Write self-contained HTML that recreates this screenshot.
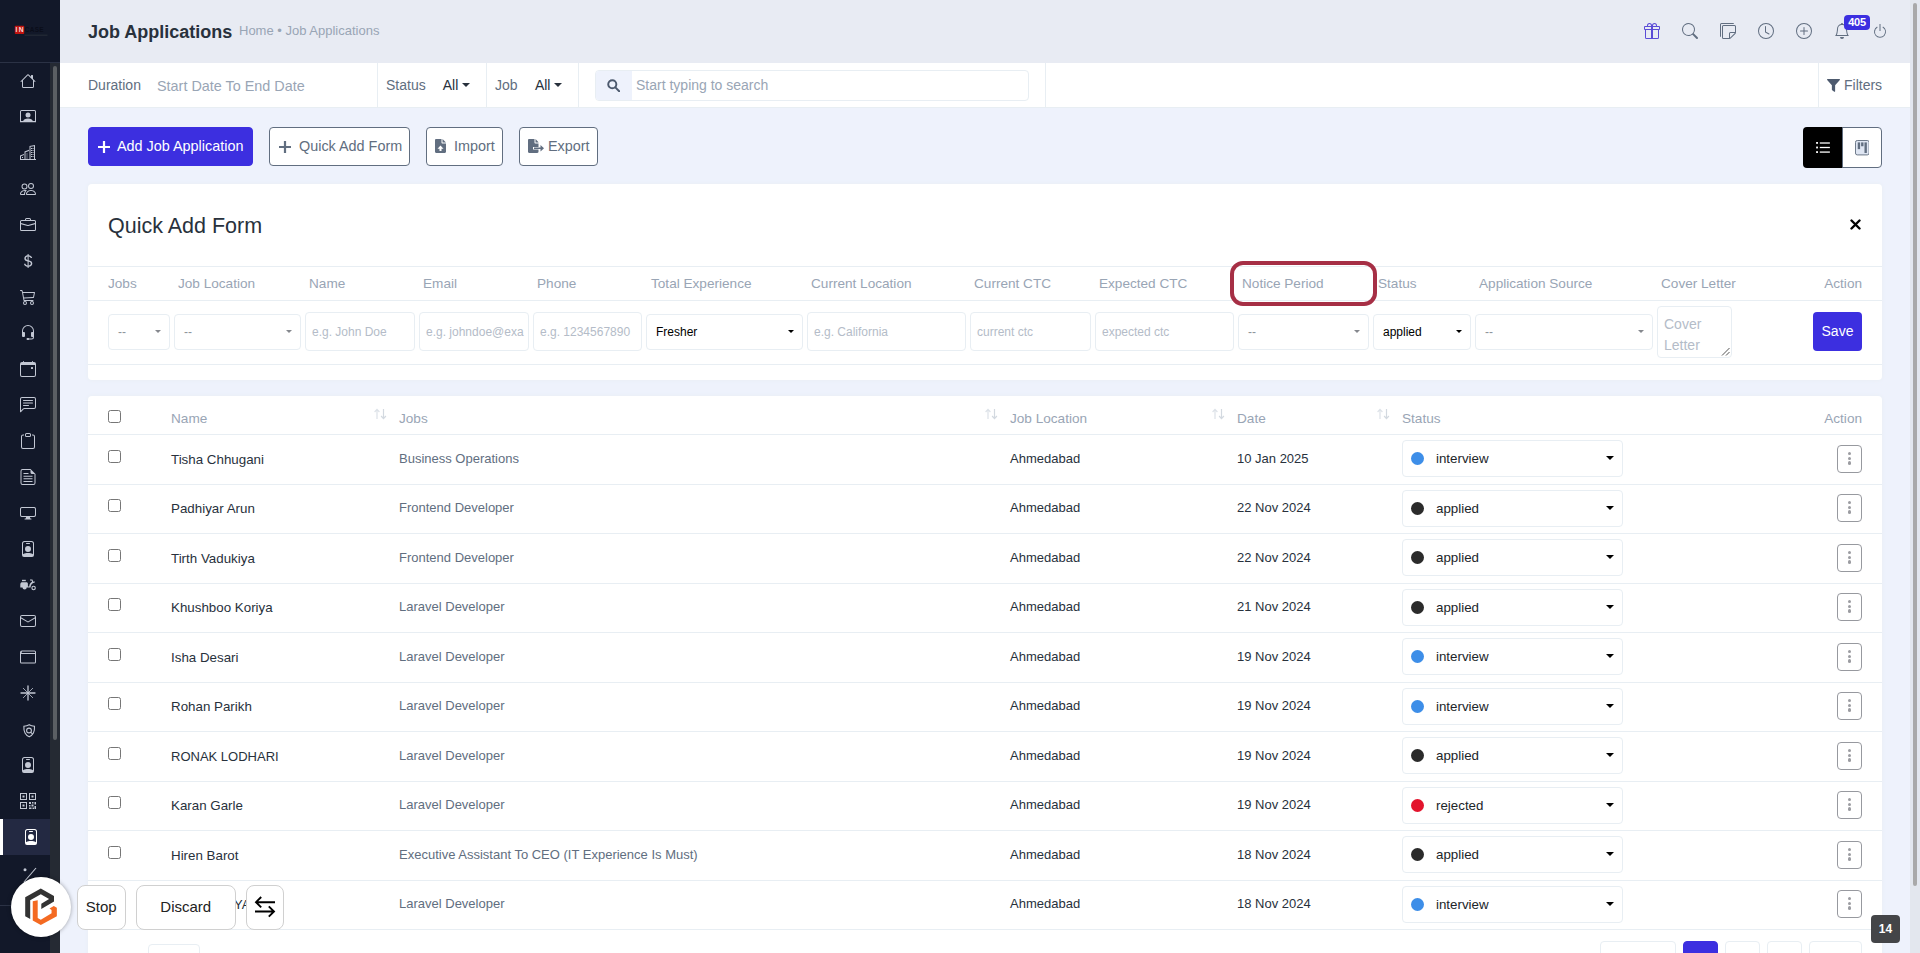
<!DOCTYPE html>
<html lang="en">
<head>
<meta charset="utf-8">
<title>Job Applications</title>
<style>
*{box-sizing:border-box;margin:0;padding:0}
html,body{width:1920px;height:953px;overflow:hidden}
body{position:relative;background:#eef2fc;font-family:"Liberation Sans",Arial,sans-serif;font-size:14px;color:#28313c}
.abs{position:absolute}
.ic{display:block;overflow:visible}
#side{position:absolute;left:0;top:0;width:60px;height:953px;background:#121829}
#side .logo{position:absolute;left:0;top:0;width:60px;height:63px;border-bottom:1px solid #2b3245}
#side .track{position:absolute;left:50px;top:63px;width:10px;height:890px;background:#252a33}
#side .thumb{position:absolute;left:53px;top:66px;width:4px;height:674px;background:#5b5f63;border-radius:2px}
.sic{position:absolute;left:20px;width:16px;height:16px}
.sact{position:absolute;left:0;width:50px;height:36px;background:#232942;border-left:3px solid #fff}
#side .sep{position:absolute;left:0;top:905px;width:50px;height:1px;background:#2b3245}
#head{position:absolute;left:60px;top:0;width:1850px;height:63px;background:#e8ebf3}
#head h1{position:absolute;left:28px;top:21px;font-size:18px;line-height:22px;font-weight:bold;color:#28313c;white-space:nowrap}
#head .bc{position:absolute;left:179px;top:23px;font-size:13px;line-height:16px;color:#99a5b5;white-space:nowrap}
.tic{position:absolute;top:23px;width:16px;height:16px}
.nbadge{position:absolute;left:1844px;top:15px;width:26px;height:15px;border-radius:4px;background:#3c2fe0;color:#fff;font-size:11px;font-weight:bold;line-height:15px;text-align:center;letter-spacing:-0.3px}
#vscroll{position:absolute;left:1910px;top:0;width:10px;height:953px;background:#e3e7ee}
#vscroll i{position:absolute;left:3px;top:3px;width:4px;height:883px;background:#a9a9a9;border-radius:2px}
#fbar{position:absolute;left:60px;top:63px;width:1850px;height:45px;background:#fff;border-bottom:1px solid #e8eef3}
#fbar .vl{position:absolute;top:0;width:1px;height:44px;background:#e8eef3}
#fbar .t{position:absolute;top:13px;line-height:18px;font-size:14px;color:#616e80;white-space:nowrap}
#fbar .ph{color:#99a5b5}
#fbar .dk{color:#28313c}
.caret{display:inline-block;width:0;height:0;border-left:4px solid transparent;border-right:4px solid transparent;border-top:4px solid #28313c;margin-left:4px;vertical-align:3px}
#sbox{position:absolute;left:535px;top:7px;width:434px;height:31px;border:1px solid #e8eef3;border-radius:4px;background:#fff;overflow:hidden}
#sbox .ad{position:absolute;left:0;top:0;width:36px;height:29px;background:#eef2fc}
#sbox .ph{position:absolute;left:40px;top:5px;font-size:14px;line-height:18px;color:#99a5b5}
.btn{position:absolute;top:127px;height:39px;border-radius:4px;font-size:14.400px;line-height:37px;white-space:nowrap;border:1px solid #616e80;background:#fff;color:#616e80}
.btn.pri{background:#3c2fe0;border-color:#3c2fe0;color:#fff}
.btn span{position:absolute;top:0}
.btn svg{position:absolute}
#vt{position:absolute;left:1803px;top:127px;width:79px;height:41px}
#vt .l{position:absolute;left:0;top:0;width:40px;height:41px;background:#000;border-radius:4px 0 0 4px}
#vt .r{position:absolute;left:39px;top:0;width:40px;height:41px;background:#fff;border:1px solid #616e80;border-radius:0 4px 4px 0}
.card{position:absolute;left:88px;width:1794px;background:#fff;border-radius:4px;box-shadow:0 0 4px 0 #e8eef3}
#qa{top:184px;height:196px}
#qa h2{position:absolute;left:20px;top:29px;font-size:21.500px;line-height:26px;font-weight:normal;color:#28313c}
#qa .hl{position:absolute;left:0;width:1794px;height:1px;background:#e8eef3}
#qa .lb{position:absolute;top:92px;font-size:13.600px;line-height:16px;color:#99a5b5;white-space:nowrap}
.inp{position:absolute;top:128.200px;height:38.400px;border:1px solid #e8eef3;border-radius:4px;background:#fff;font-size:12px;line-height:36px;padding-top:1.300px;color:#b4bcc8;padding-left:6px;white-space:nowrap;overflow:hidden}
.sel{position:absolute;top:130px;height:36px;border:1px solid #e8eef3;border-radius:4px;background:#fff;font-size:12px;line-height:34px;color:#8e939b;padding-left:9px;white-space:nowrap;overflow:hidden}
.sel.dk{color:#000}
.sel b{position:absolute;right:8px;top:15px;width:0;height:0;border-left:3px solid transparent;border-right:3px solid transparent;border-top:3.300px solid #85888e}
.sel.dk b{border-top-color:#000;border-left-width:3.500px;border-right-width:3.500px}
#hlbox{position:absolute;left:1230px;top:261px;width:146.500px;height:45px;border:4px solid #a62f45;border-radius:13px}
#tb{top:396px;height:600px}
#tb .th{position:absolute;top:15px;font-size:13.600px;line-height:16px;color:#99a5b5;white-space:nowrap}
#tb .hl{position:absolute;left:0;width:1794px;height:1px;background:#e8eef3}
.tr{position:absolute;left:0;width:1794px;height:50px}
.tr .ln{position:absolute;left:0;width:1794px;height:1px;background:#e8eef3}
.cb{position:absolute;left:20px;top:16px;width:13px;height:13px;border:1px solid #767676;border-radius:2.500px;background:#fff}
.td{position:absolute;top:17px;font-size:13px;line-height:16px;color:#616e80;white-space:nowrap}
.td.dk{color:#28313c}
.td.nm{color:#28313c;top:17.500px;font-size:13.350px}
.ssel{position:absolute;left:1314px;width:220.500px;height:37.400px;border:1px solid #e8eef3;border-radius:4px;background:#fff}
.ssel i{position:absolute;left:8px;top:11px;width:13px;height:13px;border-radius:50%}
.ssel span{position:absolute;left:33px;top:9px;font-size:13.330px;line-height:17px;color:#212529}
.ssel .car{position:absolute;right:8px;top:15px;width:0;height:0;border-left:4px solid transparent;border-right:4px solid transparent;border-top:4px solid #000}
.act{position:absolute;left:1749px;top:11px;width:25px;height:28px;border:1px solid #97999f;border-radius:4px;background:#fff}
.act i{display:block;width:3.300px;height:3.300px;border-radius:50%;background:#9b9ca1;margin:0 auto 1.500px}
.act i:first-child{margin-top:5.900px}
.srt{position:absolute;top:11.500px}
.pg{position:absolute;top:545px;height:40px;border:1px solid #e8eef3;border-radius:4px;background:#fff}
#ov .ob{position:absolute;top:885px;height:44.500px;border:1px solid #d0d0d0;border-radius:8px;background:#fff;font-size:15px;line-height:42px;text-align:center;color:#222}
#ov .circ{position:absolute;left:11px;top:877px;width:60px;height:60px;border-radius:50%;background:#fff;box-shadow:0 0 4px rgba(0,0,0,.35)}
#b14{position:absolute;left:1871px;top:915px;width:29px;height:28px;border-radius:4px;background:#444548;color:#fff;font-size:12px;font-weight:bold;line-height:28px;text-align:center}
</style>
</head>
<body>
<div id="side">
<div class="logo"><svg width="60" height="63" viewBox="0 0 60 63"><rect x="14.800" y="25.800" width="9.400" height="8.200" rx="0.800" fill="#c01410"/><text x="15.400" y="32.300" font-family="Liberation Sans, sans-serif" font-size="6.600" font-weight="bold" fill="#f6dada" textLength="8">IN</text><text x="24.800" y="32.200" font-family="Liberation Sans, sans-serif" font-size="6.400" font-weight="bold" fill="#0a0d19" letter-spacing="0.300">CASE</text><rect x="24.500" y="34.600" width="23" height="1.200" fill="#252b36"/></svg></div>
<div class="track"></div><div class="thumb"></div>
<div class="sic" style="top:73px;left:20px;color:#c3c8d4"><svg class="ic" width="16" height="16" viewBox="0 0 16 16" fill="currentColor" style=""><path d="M8.707 1.5a1 1 0 0 0-1.414 0L.646 8.146a.5.5 0 0 0 .708.708L2 8.207V13.5A1.5 1.5 0 0 0 3.5 15h9a1.5 1.5 0 0 0 1.5-1.5V8.207l.646.647a.5.5 0 0 0 .708-.708L13 5.793V2.5a.5.5 0 0 0-.5-.5h-1a.5.5 0 0 0-.5.5v1.293L8.707 1.5ZM13 7.207V13.5a.5.5 0 0 1-.5.5h-9a.5.5 0 0 1-.5-.5V7.207l5-5 5 5Z"/></svg></div>
<div class="sic" style="top:109px;left:20px;color:#c3c8d4"><svg class="ic" width="16" height="16" viewBox="0 0 16 16" fill="currentColor" style=""><path d="M1.5 2h13a.5.5 0 0 1 .5.5V12h1V2.5A1.5 1.5 0 0 0 14.5 1h-13A1.5 1.5 0 0 0 0 2.500V12h1V2.500a.5.5 0 0 1 .5-.5Z"/><path d="M0 12h3.200c.4-1.500 2-2.600 4.800-2.600s4.400 1.100 4.800 2.600H16v1.200H0Z"/><circle cx="8" cy="6" r="2.500"/></svg></div>
<div class="sic" style="top:145px;left:20px;color:#c3c8d4"><svg class="ic" width="16" height="16" viewBox="0 0 16 16" fill="currentColor" style=""><path d="M9.500 1 15 0v15h-1V1.200l-3.500.650V15h-1V1Z"/><path d="M4.500 6.500 9 4.800v1.100L5.500 7.200V15h-1V6.500Z"/><path d="M0 10.500 4 9v1.100L1 11.200V14h3.500v1H0v-4.500Z"/><path d="M11 3h1v1h-1zM12.500 3h1v1h-1zM11 5h1v1h-1zM12.500 5h1v1h-1zM11 7h1v1h-1zM12.500 7h1v1h-1zM11 9h1v1h-1zM12.500 9h1v1h-1zM11 11h1v1h-1zM12.500 11h1v1h-1zM6.500 8.500h1v1h-1zM6.500 10.500h1v1h-1zM6.500 12.500h1v1h-1zM2 12h1v1H2z"/><path d="M0 14h16v1H0z"/></svg></div>
<div class="sic" style="top:181px;left:20px;color:#c3c8d4"><svg class="ic" width="16" height="16" viewBox="0 0 16 16" fill="currentColor" style=""><path d="M15 14s1 0 1-1-1-4-5-4-5 3-5 4 1 1 1 1h8Zm-7.978-1A.261.261 0 0 1 7 12.996c.001-.264.167-1.030.760-1.720C8.312 10.629 9.282 10 11 10c1.717 0 2.687.630 3.240 1.276.593.690.758 1.457.760 1.720l-.008.002a.274.274 0 0 1-.014.002H7.022ZM11 7a2 2 0 1 0 0-4 2 2 0 0 0 0 4Zm3-2a3 3 0 1 1-6 0 3 3 0 0 1 6 0ZM6.936 9.280a5.880 5.880 0 0 0-1.230-.247A7.350 7.350 0 0 0 5 9c-4 0-5 3-5 4 0 .667.333 1 1 1h4.216A2.238 2.238 0 0 1 5 13c0-1.010.377-2.042 1.090-2.904.243-.294.526-.569.846-.816ZM4.920 10A5.493 5.493 0 0 0 4 13H1c0-.260.164-1.030.760-1.724.545-.636 1.492-1.256 3.160-1.275ZM1.500 5.500a3 3 0 1 1 6 0 3 3 0 0 1-6 0Zm3-2a2 2 0 1 0 0 4 2 2 0 0 0 0-4Z"/></svg></div>
<div class="sic" style="top:217px;left:20px;color:#c3c8d4"><svg class="ic" width="16" height="16" viewBox="0 0 16 16" fill="currentColor" style=""><path d="M6.500 1A1.500 1.500 0 0 0 5 2.500V3H1.500A1.500 1.500 0 0 0 0 4.500v8A1.500 1.500 0 0 0 1.500 14h13a1.500 1.500 0 0 0 1.500-1.500v-8A1.500 1.500 0 0 0 14.500 3H11v-.5A1.500 1.500 0 0 0 9.500 1h-3zm0 1h3a.5.5 0 0 1 .5.5V3H6v-.5a.5.5 0 0 1 .5-.5zm1.886 6.914L15 7.151V12.500a.5.5 0 0 1-.5.5h-13a.5.5 0 0 1-.5-.5V7.150l6.614 1.764a1.500 1.500 0 0 0 .772 0zM1.500 4h13a.5.5 0 0 1 .5.5v1.616L8.129 7.948a.5.5 0 0 1-.258 0L1 6.116V4.500a.5.5 0 0 1 .5-.5z"/></svg></div>
<div class="sic" style="top:253px;left:20px;color:#c3c8d4"><svg class="ic" width="16" height="16" viewBox="0 0 16 16" fill="currentColor" style=""><path d="M4 10.781c.148 1.667 1.513 2.850 3.591 3.003V15h1.043v-1.216c2.270-.179 3.678-1.438 3.678-3.300 0-1.590-.947-2.510-2.956-3.028l-.722-.187V3.467c1.122.110 1.879.714 2.070 1.616h1.470c-.166-1.600-1.540-2.748-3.540-2.875V1H7.591v1.233c-1.939.230-3.270 1.472-3.270 3.156 0 1.454.966 2.483 2.661 2.917l.610.162v4.031c-1.149-.170-1.940-.800-2.131-1.718H4zm3.391-3.836c-1.043-.263-1.600-.825-1.600-1.616 0-.944.704-1.641 1.800-1.828v3.495l-.200-.050zm1.591 1.872c1.287.323 1.852.859 1.852 1.769 0 1.097-.826 1.828-2.200 1.939V8.730l.348.086z"/></svg></div>
<div class="sic" style="top:289px;left:20px;color:#c3c8d4"><svg class="ic" width="16" height="16" viewBox="0 0 16 16" fill="currentColor" style=""><path d="M0 1.500A.5.5 0 0 1 .5 1H2a.5.5 0 0 1 .485.379L2.890 3H14.500a.5.5 0 0 1 .490.598l-1 5a.5.5 0 0 1-.465.401l-9.397.472L4.415 11H13a.5.5 0 0 1 0 1H4a.5.5 0 0 1-.491-.408L2.010 3.607 1.610 2H.5a.5.5 0 0 1-.5-.5zM3.102 4l.840 4.479 9.144-.459L13.890 4H3.102zM5 12a2 2 0 1 0 0 4 2 2 0 0 0 0-4zm7 0a2 2 0 1 0 0 4 2 2 0 0 0 0-4zm-7 1a1 1 0 1 1 0 2 1 1 0 0 1 0-2zm7 0a1 1 0 1 1 0 2 1 1 0 0 1 0-2z"/></svg></div>
<div class="sic" style="top:325px;left:20px;color:#c3c8d4"><svg class="ic" width="16" height="16" viewBox="0 0 16 16" fill="currentColor" style=""><path d="M8 1a5 5 0 0 0-5 5v1h1a1 1 0 0 1 1 1v3a1 1 0 0 1-1 1H3a1 1 0 0 1-1-1V6a6 6 0 1 1 12 0v6a2.500 2.500 0 0 1-2.500 2.500H9.366a1 1 0 0 1-.866.500h-1a1 1 0 1 1 0-2h1a1 1 0 0 1 .866.500H11.500A1.500 1.500 0 0 0 13 12h-1a1 1 0 0 1-1-1V8a1 1 0 0 1 1-1h1V6a5 5 0 0 0-5-5z"/></svg></div>
<div class="sic" style="top:361px;left:20px;color:#c3c8d4"><svg class="ic" width="16" height="16" viewBox="0 0 16 16" fill="currentColor" style=""><path d="M11 6.500a.5.5 0 0 1 .5-.5h1a.5.5 0 0 1 .5.5v1a.5.5 0 0 1-.5.5h-1a.5.5 0 0 1-.5-.5v-1z"/><path d="M3.500 0a.5.5 0 0 1 .5.5V1h8V.5a.5.5 0 0 1 1 0V1h1a2 2 0 0 1 2 2v11a2 2 0 0 1-2 2H2a2 2 0 0 1-2-2V3a2 2 0 0 1 2-2h1V.5a.5.5 0 0 1 .5-.5zM1 4v10a1 1 0 0 0 1 1h12a1 1 0 0 0 1-1V4H1z"/></svg></div>
<div class="sic" style="top:397px;left:20px;color:#c3c8d4"><svg class="ic" width="16" height="16" viewBox="0 0 16 16" fill="currentColor" style=""><path d="M14 1a1 1 0 0 1 1 1v8a1 1 0 0 1-1 1H4.414A2 2 0 0 0 3 11.586l-2 2V2a1 1 0 0 1 1-1h12zM2 0a2 2 0 0 0-2 2v12.793a.5.5 0 0 0 .854.353l2.853-2.853A1 1 0 0 1 4.414 12H14a2 2 0 0 0 2-2V2a2 2 0 0 0-2-2H2z"/><path d="M3 3.500a.5.5 0 0 1 .5-.5h9a.5.5 0 0 1 0 1h-9a.5.5 0 0 1-.5-.5zM3 6a.5.5 0 0 1 .5-.5h9a.5.5 0 0 1 0 1h-9A.5.5 0 0 1 3 6zm0 2.500a.5.5 0 0 1 .5-.5h5a.5.5 0 0 1 0 1h-5a.5.5 0 0 1-.5-.5z"/></svg></div>
<div class="sic" style="top:433px;left:20px;color:#c3c8d4"><svg class="ic" width="16" height="16" viewBox="0 0 16 16" fill="currentColor" style=""><path d="M4 1.500H3a2 2 0 0 0-2 2V14a2 2 0 0 0 2 2h10a2 2 0 0 0 2-2V3.500a2 2 0 0 0-2-2h-1v1h1a1 1 0 0 1 1 1V14a1 1 0 0 1-1 1H3a1 1 0 0 1-1-1V3.500a1 1 0 0 1 1-1h1v-1z"/><path d="M9.500 1a.5.5 0 0 1 .5.5v1a.5.5 0 0 1-.5.5h-3a.5.5 0 0 1-.5-.5v-1a.5.5 0 0 1 .5-.5h3zm-3-1A1.500 1.500 0 0 0 5 1.500v1A1.500 1.500 0 0 0 6.500 4h3A1.500 1.500 0 0 0 11 2.500v-1A1.500 1.500 0 0 0 9.500 0h-3z"/></svg></div>
<div class="sic" style="top:469px;left:20px;color:#c3c8d4"><svg class="ic" width="16" height="16" viewBox="0 0 16 16" fill="currentColor" style=""><path d="M10.500 0H2.500a2 2 0 0 0-2 2v12a2 2 0 0 0 2 2h11a2 2 0 0 0 2-2V5L10.500 0zm0 1.200v2.300A1.500 1.500 0 0 0 12 5h2.500v9a1 1 0 0 1-1 1h-11a1 1 0 0 1-1-1V2a1 1 0 0 1 1-1h8z"/><path d="M3.500 4h5v1h-5zM3.500 6.700h9v1h-9zM3.500 9.300h9v1h-9zM3.500 12h9v1h-9z"/></svg></div>
<div class="sic" style="top:505px;left:20px;color:#c3c8d4"><svg class="ic" width="16" height="16" viewBox="0 0 16 16" fill="currentColor" style=""><path d="M0 4s0-2 2-2h12s2 0 2 2v6s0 2-2 2h-4c0 .667.083 1.167.250 1.500H11a.5.5 0 0 1 0 1H5a.5.5 0 0 1 0-1h.750c.167-.333.250-.833.250-1.500H2s-2 0-2-2V4zm1.398-.855a.758.758 0 0 0-.254.302A1.460 1.460 0 0 0 1 4.010V10c0 .325.078.502.145.602.070.105.170.188.302.254a1.464 1.464 0 0 0 .538.143L2.010 11H14c.325 0 .502-.78.602-.145a.758.758 0 0 0 .254-.302 1.464 1.464 0 0 0 .143-.538L15 9.990V4c0-.325-.078-.502-.145-.602a.757.757 0 0 0-.302-.254A1.460 1.460 0 0 0 13.990 3H2c-.325 0-.502.078-.602.145z"/></svg></div>
<div class="sic" style="top:541px;left:20px;color:#c3c8d4"><svg class="ic" width="16" height="16" viewBox="0 0 16 16" fill="currentColor" style=""><path d="M6.500 2a.5.5 0 0 0 0 1h3a.5.5 0 0 0 0-1h-3zM11 8a3 3 0 1 1-6 0 3 3 0 0 1 6 0z"/><path d="M4.500 0A2.500 2.500 0 0 0 2 2.500V14a2 2 0 0 0 2 2h8a2 2 0 0 0 2-2V2.500A2.500 2.500 0 0 0 11.500 0h-7zM3 2.500A1.500 1.500 0 0 1 4.500 1h7A1.500 1.500 0 0 1 13 2.500v10.795a4.200 4.200 0 0 0-.776-.492C11.392 12.387 10.063 12 8 12s-3.392.387-4.224.803a4.200 4.200 0 0 0-.776.492V2.500z"/></svg></div>
<div class="sic" style="top:577px;left:20px;color:#c3c8d4"><svg class="ic" width="16" height="16" viewBox="0 0 16 16" fill="currentColor" style=""><path d="M1.800 5.200h4.600c.900 0 1.500.700 1.500 1.500V9.500h1.300c.2-2.300 1.300-3.900 2.900-4.700L11.600 3.500H10V2.400h2.400l.900 2.300c.5-.1.900-.2 1.500-.2v1.100c-2.400.2-4.100 2-4.300 4.900H6.700a2.100 2.100 0 0 1-4.200 0H.300V7.600C.300 6.300.900 5.200 1.800 5.200Z"/><circle cx="13.600" cy="11" r="1.700" fill="none" stroke="currentColor" stroke-width="1.100"/><path d="M2 2.800h3.800v1.400H2z"/></svg></div>
<div class="sic" style="top:613px;left:20px;color:#c3c8d4"><svg class="ic" width="16" height="16" viewBox="0 0 16 16" fill="currentColor" style=""><path d="M0 4a2 2 0 0 1 2-2h12a2 2 0 0 1 2 2v8a2 2 0 0 1-2 2H2a2 2 0 0 1-2-2V4zm2-1a1 1 0 0 0-1 1v.217l7 4.200 7-4.200V4a1 1 0 0 0-1-1H2zm13 2.383-7 4.200-7-4.200V12a1 1 0 0 0 1 1h12a1 1 0 0 0 1-1V5.383z"/></svg></div>
<div class="sic" style="top:649px;left:20px;color:#c3c8d4"><svg class="ic" width="16" height="16" viewBox="0 0 16 16" fill="currentColor" style=""><path d="M2 1.500h12.500a1.500 1.500 0 0 1 1.500 1.500v10a1.500 1.500 0 0 1-1.500 1.500h-13A1.500 1.500 0 0 1 0 13V3.500a2 2 0 0 1 2-2zm0 1a1 1 0 0 0 0 1.500h13V3a.5.5 0 0 0-.5-.5H2zM1 4.800V13a.5.5 0 0 0 .5.500h13a.5.5 0 0 0 .5-.500V5H2c-.360 0-.700-.070-1-.200z"/></svg></div>
<div class="sic" style="top:685px;left:20px;color:#c3c8d4"><svg class="ic" width="16" height="16" viewBox="0 0 16 16" fill="currentColor" style=""><g stroke="currentColor" stroke-linecap="round" fill="none"><path d="M8 1v14M1 8h14" stroke-width="1.300"/><path d="M3.300 3.300l9.400 9.400M12.700 3.300l-9.400 9.400" stroke-width="0.800"/></g></svg></div>
<div class="sic" style="top:721px;left:20px;color:#c3c8d4"><svg class="ic" width="16" height="16" viewBox="0 0 16 16" fill="currentColor" style=""><g transform="translate(2.200,2.500)"><path d="M7 1.200c-1.700.900-3.500 1.300-5.300 1.500-.2 3 .2 5.200 1.100 6.800.9 1.700 2.300 2.900 4.200 3.800 1.900-.900 3.300-2.100 4.200-3.800.9-1.600 1.300-3.800 1.100-6.800C10.500 2.500 8.700 2.100 7 1.200Z" fill="none" stroke="currentColor" stroke-width="1.100"/><circle cx="6.800" cy="7" r="2.400" fill="none" stroke="currentColor" stroke-width="1.100"/><path d="M8.600 8.800l1.900 1.900" stroke="currentColor" stroke-width="1.100"/></g></svg></div>
<div class="sic" style="top:757px;left:20px;color:#c3c8d4"><svg class="ic" width="16" height="16" viewBox="0 0 16 16" fill="currentColor" style=""><path d="M6.500 2a.5.5 0 0 0 0 1h3a.5.5 0 0 0 0-1h-3zM11 8a3 3 0 1 1-6 0 3 3 0 0 1 6 0z"/><path d="M4.500 0A2.500 2.500 0 0 0 2 2.500V14a2 2 0 0 0 2 2h8a2 2 0 0 0 2-2V2.500A2.500 2.500 0 0 0 11.500 0h-7zM3 2.500A1.500 1.500 0 0 1 4.500 1h7A1.500 1.500 0 0 1 13 2.500v10.795a4.200 4.200 0 0 0-.776-.492C11.392 12.387 10.063 12 8 12s-3.392.387-4.224.803a4.200 4.200 0 0 0-.776.492V2.500z"/></svg></div>
<div class="sic" style="top:793px;left:20px;color:#c3c8d4"><svg class="ic" width="16" height="16" viewBox="0 0 16 16" fill="currentColor" style=""><path d="M0 0h7v7H0V0zm1 1v5h5V1H1zm1.500 1.500h2v2h-2zM9 0h7v7H9V0zm1 1v5h5V1h-5zm1.500 1.500h2v2h-2zM0 9h7v7H0V9zm1 1v5h5v-5H1zm1.500 1.500h2v2h-2zM9 9h2v2H9zM12 9h1.500v1.500H12zM14.500 9H16v2.500h-1.500zM9 12h1.500v1.500H9zM11.500 11.500h2v2h-2zM9 14.500h2.500V16H9zM12.500 14.500H14V16h-1.500zM14.500 13H16v3h-1.500z"/></svg></div>
<div class="sact" style="top:819px"></div><div class="sic" style="top:829px;left:23px;color:#fff"><svg class="ic" width="16" height="16" viewBox="0 0 16 16" fill="currentColor" style=""><path d="M6.500 2a.5.5 0 0 0 0 1h3a.5.5 0 0 0 0-1h-3zM11 8a3 3 0 1 1-6 0 3 3 0 0 1 6 0z"/><path d="M4.500 0A2.500 2.500 0 0 0 2 2.500V14a2 2 0 0 0 2 2h8a2 2 0 0 0 2-2V2.500A2.500 2.500 0 0 0 11.500 0h-7zM3 2.500A1.500 1.500 0 0 1 4.500 1h7A1.500 1.500 0 0 1 13 2.500v10.795a4.200 4.200 0 0 0-.776-.492C11.392 12.387 10.063 12 8 12s-3.392.387-4.224.803a4.200 4.200 0 0 0-.776.492V2.500z"/></svg></div>
<div class="sic" style="top:865px;left:20px;color:#c3c8d4"><svg class="ic" width="16" height="16" viewBox="0 0 16 16" fill="currentColor" style=""><circle cx="5" cy="4.800" r="1.500"/><path d="M16 3 4 17" stroke="currentColor" stroke-width="1.100"/></svg></div>

<div class="sep"></div>
</div>
<div id="head">
<h1>Job Applications</h1>
<div class="bc">Home • Job Applications</div>
</div>
<div class="tic" style="left:1644px;color:#5b4cd6"><svg class="ic" width="16" height="16" viewBox="0 0 16 16" fill="currentColor" style=""><path d="M3 2.500a2.500 2.500 0 0 1 5 0 2.500 2.500 0 0 1 5 0v.006c0 .070 0 .270-.038.494H15a1 1 0 0 1 1 1v2a1 1 0 0 1-1 1v7.500a1.500 1.500 0 0 1-1.500 1.500h-11A1.500 1.500 0 0 1 1 14.500V7a1 1 0 0 1-1-1V4a1 1 0 0 1 1-1h2.038A2.968 2.968 0 0 1 3 2.506V2.500zm1.068.5H7v-.5a1.500 1.500 0 1 0-3 0c0 .085.002.274.045.430a.522.522 0 0 0 .023.070zM9 3h2.932a.560.560 0 0 0 .023-.070c.043-.156.045-.345.045-.430a1.500 1.500 0 0 0-3 0V3zM1 4v2h6V4H1zm8 0v2h6V4H9zm5 3H9v8h4.500a.5.5 0 0 0 .5-.5V7zm-7 8V7H2v7.500a.5.5 0 0 0 .5.500H7z"/></svg></div>
<div class="tic" style="left:1682px;color:#616e80"><svg class="ic" width="16" height="16" viewBox="0 0 16 16" fill="currentColor" style=""><path d="M11.742 10.344a6.500 6.500 0 1 0-1.397 1.398h-.001c.030.040.062.078.098.115l3.850 3.850a1 1 0 0 0 1.415-1.414l-3.850-3.850a1.007 1.007 0 0 0-.115-.100zM12 6.500a5.500 5.500 0 1 1-11 0 5.500 5.500 0 0 1 11 0z"/></svg></div>
<div class="tic" style="left:1720px;color:#616e80"><svg class="ic" width="16" height="16" viewBox="0 0 16 16" fill="currentColor" style=""><path d="M1.500 0A1.500 1.500 0 0 0 0 1.500V13a1 1 0 0 0 1 1V1.500a.5.5 0 0 1 .5-.5H14a1 1 0 0 0-1-1H1.500z"/><path d="M3.500 2A1.500 1.500 0 0 0 2 3.500v11A1.500 1.500 0 0 0 3.500 16h6.086a1.500 1.500 0 0 0 1.060-.440l4.915-4.914A1.500 1.500 0 0 0 16 9.586V3.500A1.500 1.500 0 0 0 14.500 2h-11zM3 3.500a.5.5 0 0 1 .5-.5h11a.5.5 0 0 1 .5.5V9h-4.500A1.500 1.500 0 0 0 9 10.500V15H3.500a.5.5 0 0 1-.5-.5v-11zm7 11.293V10.500a.5.5 0 0 1 .5-.5h4.293L10 14.793z"/></svg></div>
<div class="tic" style="left:1758px;color:#616e80"><svg class="ic" width="16" height="16" viewBox="0 0 16 16" fill="currentColor" style=""><path d="M8 3.500a.5.5 0 0 0-1 0V9a.5.5 0 0 0 .252.434l3.500 2a.5.5 0 0 0 .496-.868L8 8.710V3.500z"/><path d="M8 16A8 8 0 1 0 8 0a8 8 0 0 0 0 16zm7-8A7 7 0 1 1 1 8a7 7 0 0 1 14 0z"/></svg></div>
<div class="tic" style="left:1796px;color:#616e80"><svg class="ic" width="16" height="16" viewBox="0 0 16 16" fill="currentColor" style=""><path d="M8 15A7 7 0 1 1 8 1a7 7 0 0 1 0 14zm0 1A8 8 0 1 0 8 0a8 8 0 0 0 0 16z"/><path d="M8 4a.5.5 0 0 1 .5.5v3h3a.5.5 0 0 1 0 1h-3v3a.5.5 0 0 1-1 0v-3h-3a.5.5 0 0 1 0-1h3v-3A.5.5 0 0 1 8 4z"/></svg></div>
<div class="tic" style="left:1834px;color:#616e80"><svg class="ic" width="16" height="16" viewBox="0 0 16 16" fill="currentColor" style=""><path d="M8 16a2 2 0 0 0 2-2H6a2 2 0 0 0 2 2zM8 1.918l-.797.161A4.002 4.002 0 0 0 4 6c0 .628-.134 2.197-.459 3.742-.160.767-.376 1.566-.663 2.258h10.244c-.287-.692-.502-1.490-.663-2.258C12.134 8.197 12 6.628 12 6a4.002 4.002 0 0 0-3.203-3.920L8 1.917zM14.220 12c.223.447.481.801.780 1H1c.299-.199.557-.553.780-1C2.680 10.200 3 6.880 3 6c0-2.420 1.720-4.440 4.005-4.901a1 1 0 1 1 1.990 0A5.002 5.002 0 0 1 13 6c0 .880.320 4.200 1.220 6z"/></svg></div>
<div class="tic" style="left:1872px;color:#616e80"><svg class="ic" width="16" height="16" viewBox="0 0 16 16" fill="currentColor" style=""><path d="M7.500 1v7h1V1h-1z"/><path d="M3 8.812a4.999 4.999 0 0 1 2.578-4.375l-.485-.874A6 6 0 1 0 11 3.616l-.501.865A5 5 0 1 1 3 8.812z"/></svg></div>

<div class="nbadge">405</div>
<div id="fbar">
<span class="t" style="left:28px">Duration</span>
<span class="t ph" style="left:97px;top:14px;font-size:14.400px">Start Date To End Date</span>
<div class="vl" style="left:317px"></div>
<span class="t" style="left:326px">Status</span>
<span class="t dk" style="left:382.700px">All<i class="caret"></i></span>
<div class="vl" style="left:426px"></div>
<span class="t" style="left:435px">Job</span>
<span class="t dk" style="left:474.900px">All<i class="caret"></i></span>
<div class="vl" style="left:518px"></div>
<div id="sbox"><div class="ad"><svg width="13" height="13" viewBox="0 0 16 16" style="position:absolute;left:11px;top:8px" fill="none" stroke="#4d5a6e" stroke-width="2.400"><circle cx="6.500" cy="6.500" r="5"/><path d="M10.300 10.300 15 15" stroke-linecap="round"/></svg></div><span class="ph">Start typing to search</span></div>
<div class="vl" style="left:985px"></div>
<div class="vl" style="left:1758px"></div>
<svg width="13" height="13" viewBox="0 0 16 16" style="position:absolute;left:1767px;top:16px" fill="#4d5a6e"><path d="M.700 0h14.600c.6 0 .900.700.500 1.200L10 7.600V15c0 .600-.600.900-1.100.600l-2.500-1.700A.8.8 0 0 1 6 13.200V7.600L.200 1.200C-.2.700.100 0 .700 0Z"/></svg>
<span class="t" style="left:1784px">Filters</span>
</div>

<div class="btn pri" style="left:88px;width:165px"><svg width="12" height="12" viewBox="0 0 13 13" style="left:9px;top:12.500px"><path d="M5.300 0h2.400v5.300H13v2.400H7.700V13H5.300V7.700H0V5.300h5.300z" fill="#fff"/></svg><span style="left:28px">Add Job Application</span></div>
<div class="btn" style="left:269px;width:141px"><svg width="12" height="12" viewBox="0 0 13 13" style="left:9px;top:12.500px"><path d="M5.300 0h2.400v5.300H13v2.400H7.700V13H5.300V7.700H0V5.300h5.300z" fill="#616e80"/></svg><span style="left:29px">Quick Add Form</span></div>
<div class="btn" style="left:426px;width:77px"><svg width="11" height="14" viewBox="0 0 11 14" style="left:8px;top:11px" fill="#616e80"><path d="M1.200 0H6.500v3.500c0 .6.400 1 1 1H11V12.800c0 .7-.5 1.200-1.200 1.200H1.200C.5 14 0 13.500 0 12.800V1.200C0 .5.500 0 1.200 0Z"/><path d="M7.500 0 11 3.500H7.500z"/><path d="M5.500 6.500 8.500 9.700H6.500V12h-2V9.700h-2z" fill="#fff"/></svg><span style="left:27px">Import</span></div>
<div class="btn" style="left:519px;width:79px"><svg width="16" height="14" viewBox="0 0 16 14" style="left:8px;top:11px" fill="#616e80"><path d="M1.200 0H6.500v3.500c0 .6.400 1 1 1H10.500V8H5v2.500h5.500V12.800c0 .7-.5 1.200-1.200 1.200H1.200C.5 14 0 13.500 0 12.800V1.200C0 .5.500 0 1.200 0Z"/><path d="M7.500 0 10.500 3.200V3.500H7.500z"/><path d="M12.500 6 16 9.250 12.500 12.500V10.100H6V8.400h6.500z"/></svg><span style="left:28px">Export</span></div>
<div id="vt"><div class="l"><svg width="14" height="11" viewBox="0 0 15 12" style="position:absolute;left:13px;top:15px" fill="#fff"><rect x="0" y="0" width="2" height="2"/><rect x="0" y="5" width="2" height="2"/><rect x="0" y="10" width="2" height="2"/><rect x="4" y=".400" width="11" height="1.400"/><rect x="4" y="5.300" width="11" height="1.400"/><rect x="4" y="10.300" width="11" height="1.400"/></svg></div><div class="r"><svg width="14.600" height="15.400" viewBox="0 0 16 16" preserveAspectRatio="none" style="position:absolute;left:11.700px;top:12.400px"><rect x=".500" y=".500" width="15" height="15" rx="2" fill="#dfe6f3" stroke="#616e80"/><rect x="3" y="2.500" width="2.600" height="7" fill="#616e80"/><rect x="6.700" y="2.500" width="2.600" height="4" fill="#616e80"/><rect x="10.400" y="2.500" width="2.600" height="11" fill="#616e80"/></svg></div></div>

<div class="card" id="qa">
<h2>Quick Add Form</h2>
<svg width="11" height="11" viewBox="0 0 11 11" style="position:absolute;left:1762px;top:35px"><path d="M1.500 1.500l8 8M9.500 1.500l-8 8" stroke="#000" stroke-width="2.400" stroke-linecap="round"/></svg>
<div class="hl" style="top:82px"></div>
<div class="hl" style="top:116px"></div>
<div class="hl" style="top:180px"></div>
<span class="lb" style="left:20px">Jobs</span>
<span class="lb" style="left:90px">Job Location</span>
<span class="lb" style="left:221px">Name</span>
<span class="lb" style="left:335px">Email</span>
<span class="lb" style="left:449px">Phone</span>
<span class="lb" style="left:563px">Total Experience</span>
<span class="lb" style="left:723px">Current Location</span>
<span class="lb" style="left:886px">Current CTC</span>
<span class="lb" style="left:1011px">Expected CTC</span>
<span class="lb" style="left:1154px">Notice Period</span>
<span class="lb" style="left:1290px">Status</span>
<span class="lb" style="left:1391px">Application Source</span>
<span class="lb" style="left:1573px">Cover Letter</span>
<span class="lb" style="right:20px">Action</span>
<div class="sel" style="left:20px;width:62px">--<b></b></div>
<div class="sel" style="left:86px;width:127px">--<b></b></div>
<div class="inp" style="left:217px;width:110px">e.g. John Doe</div>
<div class="inp" style="left:331px;width:110px">e.g. johndoe@exa</div>
<div class="inp" style="left:445px;width:109px">e.g. 1234567890</div>
<div class="sel dk" style="left:558px;width:157px">Fresher<b></b></div>
<div class="inp" style="left:719px;width:159px">e.g. California</div>
<div class="inp" style="left:882px;width:121px">current ctc</div>
<div class="inp" style="left:1007px;width:139px">expected ctc</div>
<div class="sel" style="left:1150px;width:131px">--<b></b></div>
<div class="sel dk" style="left:1285px;width:98px">applied<b></b></div>
<div class="sel" style="left:1387px;width:178px">--<b></b></div>
<div class="inp" style="left:1569px;top:122px;width:75px;height:51.500px;line-height:21px;padding-top:7px;font-size:14px;white-space:normal">Cover Letter<svg width="9" height="9" viewBox="0 0 9 9" style="position:absolute;right:1px;bottom:1px"><path d="M8.500 1 1 8.500M8.500 5 5 8.500" stroke="#555" stroke-width="1"/></svg></div>
<div class="abs" style="left:1725px;top:128px;width:49px;height:39px;border-radius:4px;background:#3c2fe0;color:#fff;font-size:14px;line-height:38px;text-align:center">Save</div>
</div>
<div id="hlbox"></div>

<div class="card" id="tb">
<span class="cb" style="top:14px"></span>
<span class="th" style="left:83px">Name</span>
<span class="th" style="left:311px">Jobs</span>
<span class="th" style="left:922px">Job Location</span>
<span class="th" style="left:1149px">Date</span>
<span class="th" style="left:1314px">Status</span>
<span class="th" style="right:20px">Action</span>
<svg class="srt" style="left:286px" width="13" height="12" viewBox="0 0 13 12" fill="none" stroke="#dde2e8" stroke-width="1.200"><path d="M3 11V1.500M.600 4 3 1.300 5.400 4"/><path d="M9.500 1v9.500M7.100 8l2.400 2.700L11.900 8" stroke="#d3d9e0"/></svg>
<svg class="srt" style="left:897px" width="13" height="12" viewBox="0 0 13 12" fill="none" stroke="#dde2e8" stroke-width="1.200"><path d="M3 11V1.500M.600 4 3 1.300 5.400 4"/><path d="M9.500 1v9.500M7.100 8l2.400 2.700L11.900 8" stroke="#d3d9e0"/></svg>
<svg class="srt" style="left:1124px" width="13" height="12" viewBox="0 0 13 12" fill="none" stroke="#dde2e8" stroke-width="1.200"><path d="M3 11V1.500M.600 4 3 1.300 5.400 4"/><path d="M9.500 1v9.500M7.100 8l2.400 2.700L11.900 8" stroke="#d3d9e0"/></svg>
<svg class="srt" style="left:1289px" width="13" height="12" viewBox="0 0 13 12" fill="none" stroke="#dde2e8" stroke-width="1.200"><path d="M3 11V1.500M.600 4 3 1.300 5.400 4"/><path d="M9.500 1v9.500M7.100 8l2.400 2.700L11.900 8" stroke="#d3d9e0"/></svg>
<div class="tr" style="top:38px">
<div class="ln" style="top:0px"></div>
<span class="cb"></span>
<span class="td nm" style="left:83px">Tisha Chhugani</span>
<span class="td" style="left:311px">Business Operations</span>
<span class="td dk" style="left:922px">Ahmedabad</span>
<span class="td dk" style="left:1149px">10 Jan 2025</span>
<div class="ssel" style="top:6px"><i style="background:#3d8ee8"></i><span>interview</span><b class="car"></b></div>
<div class="act"><i></i><i></i><i></i></div>
</div>
<div class="tr" style="top:87px">
<div class="ln" style="top:1px"></div>
<span class="cb"></span>
<span class="td nm" style="left:83px">Padhiyar Arun</span>
<span class="td" style="left:311px">Frontend Developer</span>
<span class="td dk" style="left:922px">Ahmedabad</span>
<span class="td dk" style="left:1149px">22 Nov 2024</span>
<div class="ssel" style="top:7px"><i style="background:#2b2b2b"></i><span>applied</span><b class="car"></b></div>
<div class="act"><i></i><i></i><i></i></div>
</div>
<div class="tr" style="top:137px">
<div class="ln" style="top:0px"></div>
<span class="cb"></span>
<span class="td nm" style="left:83px">Tirth Vadukiya</span>
<span class="td" style="left:311px">Frontend Developer</span>
<span class="td dk" style="left:922px">Ahmedabad</span>
<span class="td dk" style="left:1149px">22 Nov 2024</span>
<div class="ssel" style="top:6px"><i style="background:#2b2b2b"></i><span>applied</span><b class="car"></b></div>
<div class="act"><i></i><i></i><i></i></div>
</div>
<div class="tr" style="top:186px">
<div class="ln" style="top:1px"></div>
<span class="cb"></span>
<span class="td nm" style="left:83px">Khushboo Koriya</span>
<span class="td" style="left:311px">Laravel Developer</span>
<span class="td dk" style="left:922px">Ahmedabad</span>
<span class="td dk" style="left:1149px">21 Nov 2024</span>
<div class="ssel" style="top:7px"><i style="background:#2b2b2b"></i><span>applied</span><b class="car"></b></div>
<div class="act"><i></i><i></i><i></i></div>
</div>
<div class="tr" style="top:236px">
<div class="ln" style="top:0px"></div>
<span class="cb"></span>
<span class="td nm" style="left:83px">Isha Desari</span>
<span class="td" style="left:311px">Laravel Developer</span>
<span class="td dk" style="left:922px">Ahmedabad</span>
<span class="td dk" style="left:1149px">19 Nov 2024</span>
<div class="ssel" style="top:6px"><i style="background:#3d8ee8"></i><span>interview</span><b class="car"></b></div>
<div class="act"><i></i><i></i><i></i></div>
</div>
<div class="tr" style="top:285px">
<div class="ln" style="top:1px"></div>
<span class="cb"></span>
<span class="td nm" style="left:83px">Rohan Parikh</span>
<span class="td" style="left:311px">Laravel Developer</span>
<span class="td dk" style="left:922px">Ahmedabad</span>
<span class="td dk" style="left:1149px">19 Nov 2024</span>
<div class="ssel" style="top:7px"><i style="background:#3d8ee8"></i><span>interview</span><b class="car"></b></div>
<div class="act"><i></i><i></i><i></i></div>
</div>
<div class="tr" style="top:335px">
<div class="ln" style="top:0px"></div>
<span class="cb"></span>
<span class="td nm" style="left:83px;font-size:13px">RONAK LODHARI</span>
<span class="td" style="left:311px">Laravel Developer</span>
<span class="td dk" style="left:922px">Ahmedabad</span>
<span class="td dk" style="left:1149px">19 Nov 2024</span>
<div class="ssel" style="top:6px"><i style="background:#2b2b2b"></i><span>applied</span><b class="car"></b></div>
<div class="act"><i></i><i></i><i></i></div>
</div>
<div class="tr" style="top:384px">
<div class="ln" style="top:1px"></div>
<span class="cb"></span>
<span class="td nm" style="left:83px">Karan Garle</span>
<span class="td" style="left:311px">Laravel Developer</span>
<span class="td dk" style="left:922px">Ahmedabad</span>
<span class="td dk" style="left:1149px">19 Nov 2024</span>
<div class="ssel" style="top:7px"><i style="background:#e3142d"></i><span>rejected</span><b class="car"></b></div>
<div class="act"><i></i><i></i><i></i></div>
</div>
<div class="tr" style="top:434px">
<div class="ln" style="top:0px"></div>
<span class="cb"></span>
<span class="td nm" style="left:83px">Hiren Barot</span>
<span class="td" style="left:311px">Executive Assistant To CEO (IT Experience Is Must)</span>
<span class="td dk" style="left:922px">Ahmedabad</span>
<span class="td dk" style="left:1149px">18 Nov 2024</span>
<div class="ssel" style="top:6px"><i style="background:#2b2b2b"></i><span>applied</span><b class="car"></b></div>
<div class="act"><i></i><i></i><i></i></div>
</div>
<div class="tr" style="top:483px">
<div class="ln" style="top:1px"></div>
<span class="cb"></span>
<span class="td nm" style="left:83px;font-size:13px">PRATEEK YADAV</span>
<span class="td" style="left:311px">Laravel Developer</span>
<span class="td dk" style="left:922px">Ahmedabad</span>
<span class="td dk" style="left:1149px">18 Nov 2024</span>
<div class="ssel" style="top:7px"><i style="background:#3d8ee8"></i><span>interview</span><b class="car"></b></div>
<div class="act"><i></i><i></i><i></i></div>
</div>

<div class="hl" style="top:533px"></div>
<div class="pg" style="left:59.500px;width:52px;top:548px"></div>
<div class="pg" style="left:1512px;width:76px"></div>
<div class="pg" style="left:1595px;width:35px;background:#3c2fe0;border-color:#3c2fe0"></div>
<div class="pg" style="left:1637px;width:35px"></div>
<div class="pg" style="left:1679px;width:35px"></div>
<div class="pg" style="left:1721px;width:53px"></div>
</div>

<div id="vscroll"><i></i></div>
<div id="b14">14</div>
<div id="ov">
<div class="circ"><svg width="60" height="60" viewBox="0 0 60 60"><path d="M14.200 20.300 29.800 11.500 43 19.100V24.500L30.300 32.100V26.700L38.050 22.100 29.800 17.200 19.200 23.200V42.100L14.200 39.200Z" fill="#333"/><path d="M21.750 24.300 26.700 23.200V40.900L29.800 42.700 40.550 36.300V33L38.500 31.600 42.800 29 45.850 30.700V39.200L29.800 48.050 21.750 43.500Z" fill="#f46a22"/></svg></div>
<div class="ob" style="left:77px;width:48.500px">Stop</div>
<div class="ob" style="left:136px;width:99.500px">Discard</div>
<div class="ob" style="left:246px;width:37.500px"><svg width="22" height="22" viewBox="0 0 22 22" style="position:absolute;left:7px;top:10px" fill="none" stroke="#000" stroke-width="1.900" stroke-linecap="butt" stroke-linejoin="miter"><path d="M21 6.200H2.200M7.200 1 2 6.200l5.200 5.200M1 15.500h18.800M14.800 10.300l5.200 5.200-5.200 5.200"/></svg></div>
</div>
</body>
</html>
